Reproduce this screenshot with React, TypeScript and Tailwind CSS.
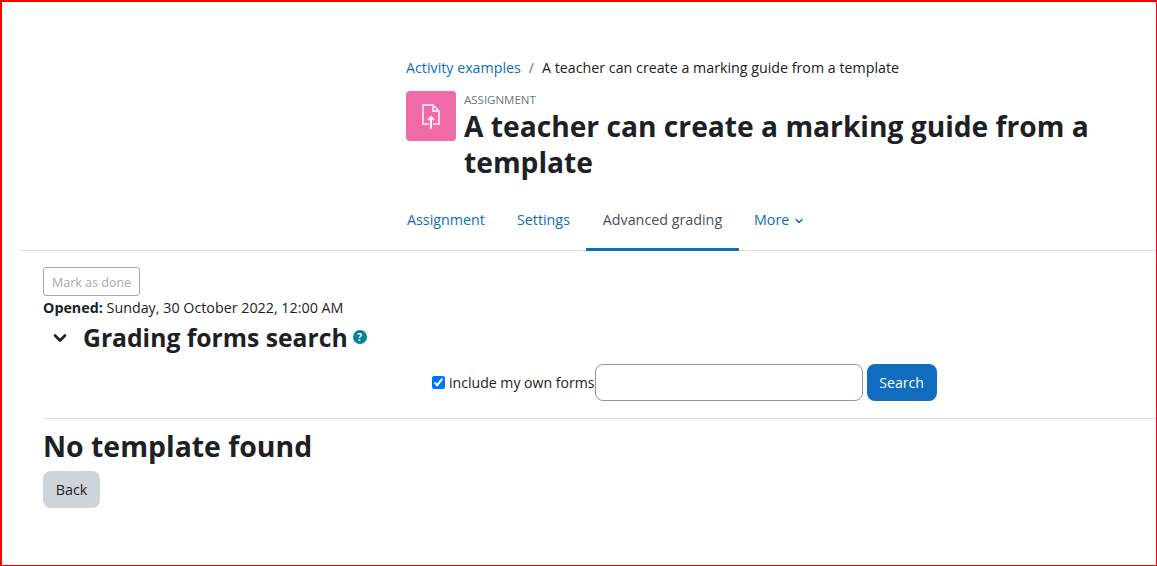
import { ChevronDown } from "lucide-react";

const App = () => {
  return (
    <div className="h-[566px] w-[1157px] overflow-hidden bg-white border-t-2 border-l-2 border-r border-b border-[#ff0000] text-[#1d2125] font-['Open_Sans','Noto_Sans',sans-serif]">
      <div className="ml-[404px] mt-[55px] flex items-center gap-2 text-[14.25px] leading-[22px]">
        <span className="text-[#0f6cbf]">Activity examples</span>
        <span className="text-[#6a737b]">/</span>
        <span>A teacher can create a marking guide from a template</span>
      </div>
      <div className="ml-[404px] mt-3 flex gap-2">
        <div className="flex h-[50px] w-[50px] shrink-0 items-center justify-center rounded bg-[#ef6aa6]">
          <svg width="24" height="26" viewBox="0 0 24 26" fill="none" stroke="white" strokeWidth="1.4">
            <path d="M10 21H4V2h10l6 6v13h-6" />
            <path d="M14 2v6h6" />
            <path d="M12 26V14M9 17l3-3 3 3" strokeWidth="1.8" />
          </svg>
        </div>
        <div className="w-[640px] pt-px">
          <div className="text-[11.5px] leading-[16px] text-[#6a737b]">ASSIGNMENT</div>
          <h1 className="text-[28.2px] font-bold leading-[36px]">A teacher can create a marking guide from a template</h1>
        </div>
      </div>
      <div className="ml-[18px] mt-[19px] flex border-b border-[#dee2e6] pl-[371px] text-[14.3px]">
        <a className="px-4 pb-[19px] pt-[10px] leading-[22px] text-[#0f6cbf]">Assignment</a>
        <a className="px-4 pb-[19px] pt-[10px] leading-[22px] text-[#0f6cbf]">Settings</a>
        <a className="-mb-px w-[153px] border-b-[3px] border-[#0f6cbf] pb-[17px] pt-[10px] text-center leading-[22px] text-[#495057]">Advanced grading</a>
        <a className="-ml-px flex items-start gap-1 px-4 pt-[10px] leading-[22px] text-[#0f6cbf]">
          More
          <ChevronDown size={12} strokeWidth={3} className="mt-[6px]" />
        </a>
      </div>
      <div className="pl-[41px]">
        <button className="mt-4 block h-[29px] rounded-[3px] border border-[#a5a9af] px-2 pt-[3px] text-[12.5px] text-[#a5a9af]">Mark as done</button>
        <div className="mt-px text-[14.3px] leading-[22px]">
          <b>Opened:</b> Sunday, 30 October 2022, 12:00 AM
        </div>
        <div className="ml-[7px] mt-[2px] flex items-center">
          <ChevronDown size={20} strokeWidth={3.2} />
          <h2 className="ml-[13px] text-[24.7px] font-bold leading-[34px]">Grading forms search</h2>
          <span className="mb-[2px] ml-[5px] flex h-[14px] w-[14px] items-center justify-center rounded-full bg-[#008196] text-[10px] font-bold text-white">?</span>
        </div>
        <div className="ml-[389px] mt-[9px] flex items-center text-[14.1px]">
          <input type="checkbox" defaultChecked className="h-[13px] w-[13px]" />
          <span className="ml-1">include my own forms</span>
          <div className="h-[37px] w-[268px] rounded-lg border border-[#8f959e]" />
          <button className="ml-1 h-[37px] w-[70px] rounded-lg bg-[#0f6cbf] text-white">Search</button>
        </div>
        <div className="mt-[17px] border-t border-[#dee2e6] pt-[9px]">
          <h2 className="text-[28.4px] font-bold leading-[36px]">No template found</h2>
          <button className="mt-[7px] h-[37px] w-[57px] rounded-lg bg-[#ced4da] text-[14.3px]">Back</button>
        </div>
      </div>
    </div>
  );
};

export default App;
